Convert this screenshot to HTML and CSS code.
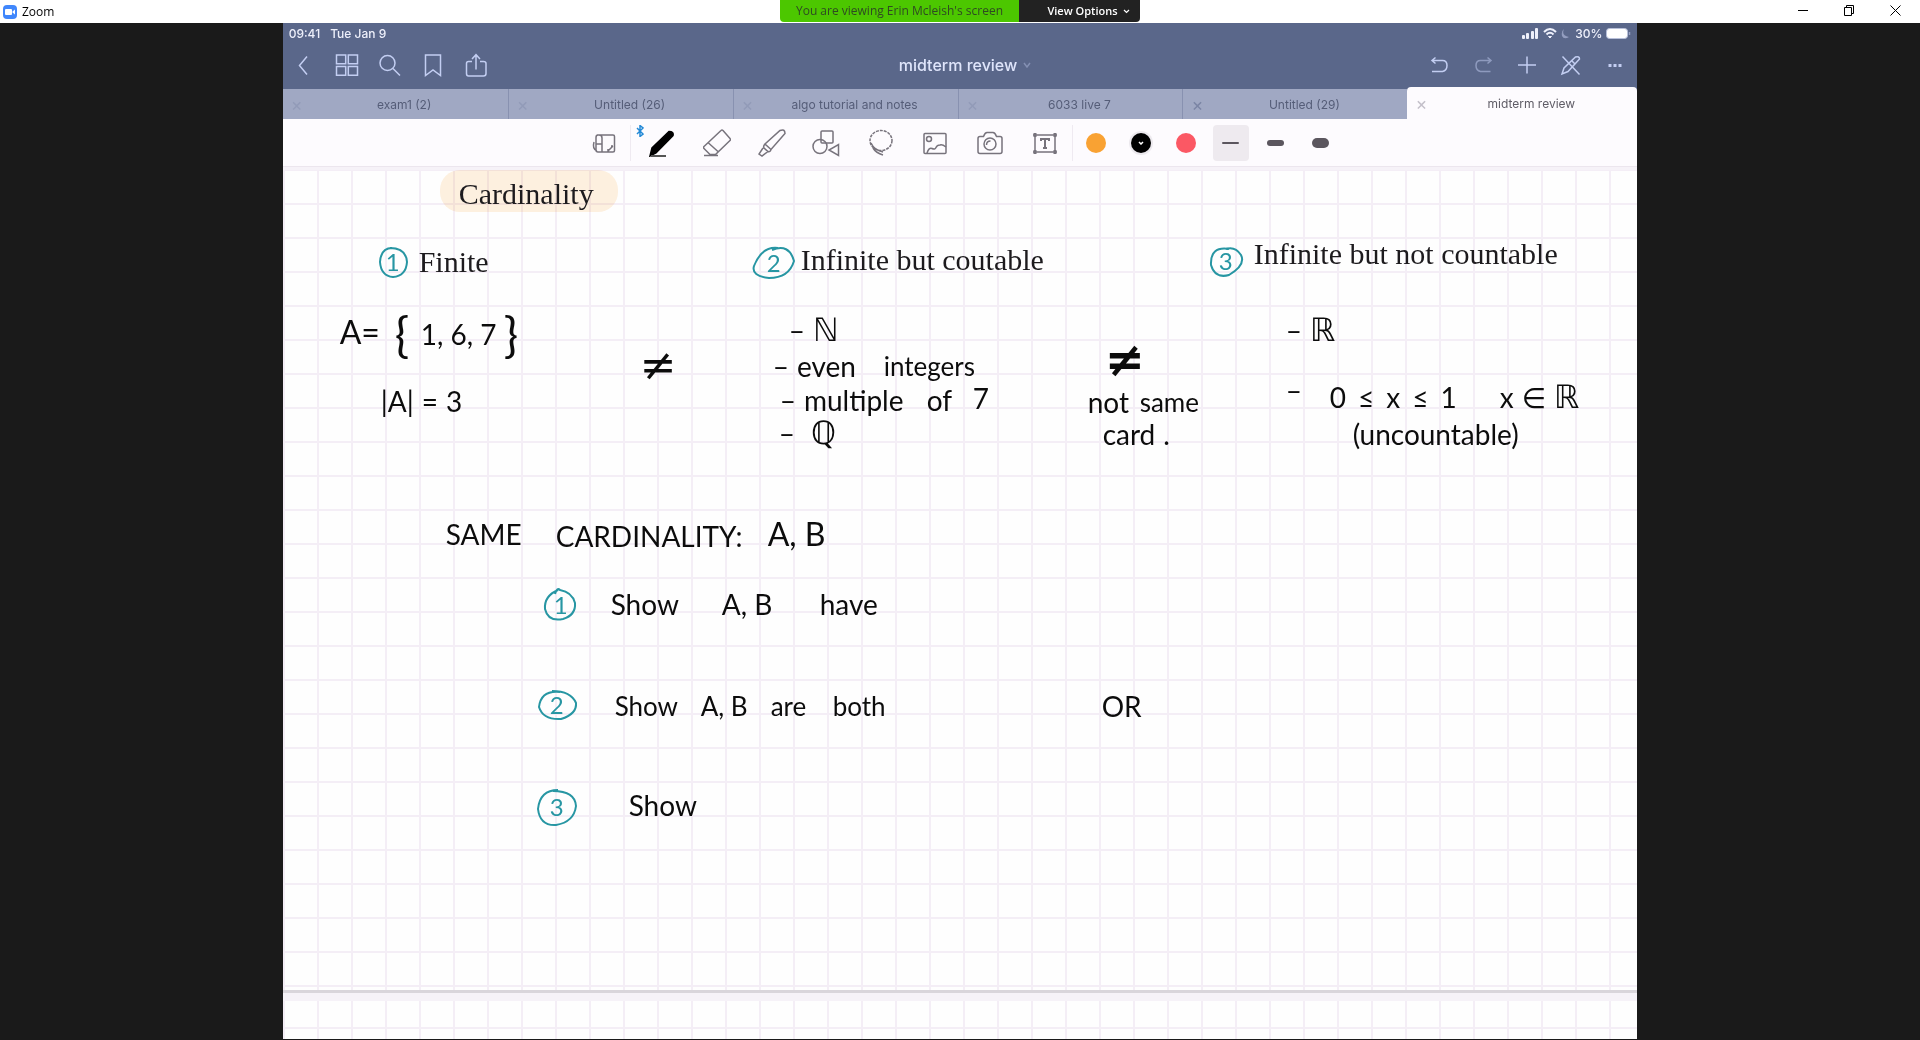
FILE: index.html
```html
<!DOCTYPE html>
<html lang="en">
<head>
<meta charset="utf-8">
<title>Zoom</title>
<link rel="stylesheet" href="styles.css">
</head>
<body>
<header class="titlebar">
  <div class="app-name">
    <svg width="14" height="14" viewBox="0 0 14 14"><rect width="14" height="14" rx="4" fill="#4087fc"/><rect x="2" y="4" width="7" height="6" rx="1" fill="#fff"/><path d="M9.5 6.4 12 4.6v4.8L9.500 7.600z" fill="#fff"/></svg>
    <span>Zoom</span>
  </div>
  <div class="share-banner">
    <span class="share-text">You are viewing Erin Mcleish's screen</span>
    <button class="view-options">View Options
      <svg width="7" height="5" viewBox="0 0 7 5"><path d="M1 1l2.500 2.500L6 1" fill="none" stroke="#fff" stroke-width="1.200"/></svg>
    </button>
  </div>
  <div class="window-buttons">
    <button aria-label="Minimize"><svg width="11" height="11" viewBox="0 0 11 11"><path d="M0 5.500h10" stroke="#000"/></svg></button>
    <button aria-label="Restore"><svg width="11" height="11" viewBox="0 0 11 11" fill="none" stroke="#000"><path d="M.5 2.500h7v8h-7zM2.500 2.500v-2h7v8h-2"/></svg></button>
    <button aria-label="Close"><svg width="11" height="11" viewBox="0 0 11 11"><path d="M.5.5l10 10M10.500.5l-10 10" stroke="#000"/></svg></button>
  </div>
</header>

<main class="stage">
<div class="tablet">
  <div class="status">
    <span>09:41</span><span>Tue Jan 9</span>
    <span class="status-right">
      <svg width="17" height="11" viewBox="0 0 17 11" fill="#eef0fb"><rect x="0" y="7" width="3" height="4" rx="1"/><rect x="4" y="5" width="3" height="6" rx="1"/><rect x="9" y="3" width="3" height="8" rx="1"/><rect x="13" y="0" width="3" height="11" rx="1"/></svg>
      <svg width="14" height="11" viewBox="0 0 14 11" fill="none" stroke="#eef0fb" stroke-width="2"><path d="M1 4Q7-2 13 4M3.500 6.500Q7 3 10.500 6.500"/><path d="M5.500 8.500h3L7 10z" fill="#eef0fb" stroke-width="1"/></svg>
      <svg width="10" height="11" viewBox="0 0 10 11"><path d="M3 1Q0 8 8 9Q3 12 1 8Q0 3 3 1z" fill="#939dbf"/></svg>
      <span>30%</span>
      <svg width="25" height="11" viewBox="0 0 25 11"><rect x=".5" y=".5" width="21" height="10" rx="3" fill="#fff" stroke="#b7bfd9"/><path d="M23.500 4v3" stroke="#97a1c2" stroke-width="1.500"/></svg>
    </span>
  </div>
  <nav class="navbar">
    <div class="nav-group">
      <button aria-label="Back"><svg width="24" height="24" viewBox="0 0 24 24"><path d="M15 3.500L7.500 12.500 15 21.500"/></svg></button>
      <button aria-label="Thumbnails"><svg width="24" height="24" viewBox="0 0 24 24"><path d="M1.500 2h9.200v8.700H1.500zM13.300 2h9.200v8.700h-9.200zM1.500 13.500h9.200v8.700H1.500zM13.300 13.500h9.200v8.700h-9.200z"/></svg></button>
      <button aria-label="Search"><svg width="24" height="24" viewBox="0 0 24 24"><circle cx="9.500" cy="10" r="7.500"/><path d="M15 15.500l7 7"/></svg></button>
      <button aria-label="Bookmark"><svg width="24" height="24" viewBox="0 0 24 24"><path d="M4.500 2h15v20.500L12 17l-7.500 5.500z"/></svg></button>
      <button aria-label="Share"><svg width="24" height="24" viewBox="0 0 24 24"><path d="M8 8.500H4.500q-2 0-2 2v10q0 2.500 2 2.500h15q2.500 0 2.500-2.500v-10q0-2-2.500-2H16M12 16.500V2M8 6l4-4.300L16 6"/></svg></button>
    </div>
    <button class="doc-title">midterm review <svg width="8" height="6" viewBox="0 0 8 6"><path d="M1 1l3 4 3-4"/></svg></button>
    <div class="nav-group">
      <button aria-label="Undo"><svg width="24" height="24" viewBox="0 0 24 24"><path d="M6 7.500h9.500q4.500 0 4.500 5t-4.500 6H5M8.500 4.500l-3.500 3 3.500 3"/></svg></button>
      <button aria-label="Redo" class="dim"><svg width="24" height="24" viewBox="0 0 24 24"><path d="M19 7.500h-9.500q-4.500 0-4.500 5t4.500 6h10M16.500 4.500l3.500 3-3.500 3"/></svg></button>
      <button aria-label="Add"><svg width="24" height="24" viewBox="0 0 24 24"><path d="M12 3.500v17M3 12h18"/></svg></button>
      <button aria-label="Pen off"><svg width="24" height="24" viewBox="0 0 24 24"><path d="M3.500 3.500l17 18M3 21l2-6L16.500 4q4-1 4 2L9 18.500zM13 8l3.500 3.500"/></svg></button>
      <button aria-label="More"><svg width="24" height="24" viewBox="0 0 24 24"><path d="M5.500 12.500h3M10.500 12.500h3M15.500 12.500h3" stroke-width="3"/></svg></button>
    </div>
  </nav>
  <div class="tabs">
    <div class="tab"><button aria-label="Close tab">×</button><a href="#">exam1 (2)</a></div>
    <div class="tab"><button aria-label="Close tab">×</button><a href="#">Untitled (26)</a></div>
    <div class="tab"><button aria-label="Close tab">×</button><a href="#">algo tutorial and notes</a></div>
    <div class="tab"><button aria-label="Close tab">×</button><a href="#">6033 live 7</a></div>
    <div class="tab near"><button aria-label="Close tab">×</button><a href="#">Untitled (29)</a></div>
    <div class="tab active"><button aria-label="Close tab">×</button><a href="#">midterm review</a></div>
  </div>
  <div class="toolbar">
    <button class="zoom-tool" aria-label="Zoom window"><svg width="26" height="26" viewBox="0 0 26 26"><path d="M6 5h16q1.500 0 1.500 1.500v14q0 1.500-1.500 1.500H7q-2 0-2-2V7.500Q5 5 7 5h1q3 0 3 3v14M5 14h6M3 12q-2 7 3 9M22 16l-5 5v-2M22 16h-2"/></svg></button>
    <div class="tools">
      <button aria-label="Pen"><svg class="bt" width="8" height="12" viewBox="0 0 8 12"><path d="M1 3l6 6-3 2.500V.5L7 3 1 9" stroke="#2389d6" stroke-width="1.500"/></svg><svg width="28" height="28" viewBox="0 0 28 28"><path d="M21 2.500q5 0 4 4L8 24l-6 3 2-8z" fill="#000" stroke="#000"/><path d="M3 27h15" stroke="#555" stroke-width="2"/></svg></button>
      <button aria-label="Eraser"><svg width="28" height="28" viewBox="0 0 28 28"><path d="M18 1.500q1-1 2 0l7 8q1 1 0 2L12.500 25.500H7L1 19.500q-1-1 0-2zM5.500 14l10 9M1 26.500h14"/></svg></button>
      <button aria-label="Highlighter"><svg width="28" height="28" viewBox="0 0 28 28"><path d="M22 1.500q5-2 5 3L13 20.500 7 15zM7 15q-2 2-1 4l4 3.500q2 1 3-2M5 19l-4 6 3 2 6-4.500"/></svg></button>
      <button aria-label="Shapes"><svg width="28" height="28" viewBox="0 0 28 28"><rect x="9" y="2" width="12" height="12" rx="1"/><circle cx="8" cy="17.500" r="7"/><path d="M26.500 15.500v11L17 21z"/></svg></button>
      <button aria-label="Lasso"><svg width="28" height="28" viewBox="0 0 28 28"><ellipse cx="14" cy="11.500" rx="11" ry="10" stroke-dasharray="3 1"/><path d="M4 14q3 7 12 9M6 19q3 5 10 7"/></svg></button>
      <button aria-label="Image"><svg width="28" height="28" viewBox="0 0 28 28"><rect x="3" y="4.500" width="22" height="20" rx="1"/><circle cx="8" cy="10" r="2.500"/><path d="M6 24q2-6 5-4.500t4-1 4-2.500q2-1 6 2"/></svg></button>
      <button aria-label="Camera"><svg width="28" height="28" viewBox="0 0 28 28"><path d="M4 7.500h3.500q1.500-4 3.500-4h6q2 0 3.500 4h3.500q2 0 2 2v13q0 2-2 2H4q-2 0-2-2v-13q0-2 2-2"/><circle cx="14" cy="15" r="6"/><path d="M10.500 16q0-4 4-4"/></svg></button>
      <button aria-label="Text"><svg width="28" height="28" viewBox="0 0 28 28"><path d="M4 5v19M24 5v19M2 6h24M2 23h24"/><path d="M4 4v4M24 4v4M4 21v4M24 21v4" stroke-width="3"/><path d="M10 12v-2h8v2M14 10v9M12 19h4" stroke-width="2"/></svg></button>
    </div>
    <div class="swatches">
      <button aria-label="Orange"><i class="dot orange"></i></button>
      <button aria-label="Black"><i class="dot black"><svg width="6" height="4" viewBox="0 0 6 4"><path d="M1 1l2 2 2-2" stroke="#fff"/></svg></i></button>
      <button aria-label="Red"><i class="dot red"></i></button>
      <button aria-label="Thin" class="selected"><i class="stroke thin"></i></button>
      <button aria-label="Medium"><i class="stroke medium"></i></button>
      <button aria-label="Thick"><i class="stroke thick"></i></button>
    </div>
  </div>

  <section class="board">
    <div class="sheet">
      <div class="marker"></div>
      <h1 class="typed t-title">Cardinality</h1>
      <h2 class="typed t-one">Finite</h2>
      <h2 class="typed t-two">Infinite but coutable</h2>
      <h2 class="typed t-three">Infinite but not countable</h2>

      <svg class="ink" width="1355" height="700" viewBox="0 0 1355 700">
        <path d="M109 82Q98 82 97 96Q98 110 110 111Q123 110 124 96Q123 82 107 82"/>
        <path d="M489 84Q506 77 511 95Q506 112 486 112Q468 110 471 100Q479 80 495 82"/>
        <path d="M946 83Q927 80 928 99Q932 113 946 109Q963 99 958 89Q952 80 943 83"/>
        <path d="M275 424Q261 430 262 443Q265 456 280 453Q293 449 292 437Q289 426 277 424Q274 421 272 428"/>
        <path d="M277 526Q258 524 256 541Q260 554 278 553Q294 548 293 537Q288 525 269 525"/>
        <path d="M275 624Q257 624 255 643Q257 660 273 659Q291 656 293 640Q292 625 270 625"/>
      </svg>
      <span class="num k1">1</span><span class="num k2">2</span><span class="num k3">3</span>
      <span class="num k4">1</span><span class="num k5">2</span><span class="num k6">3</span>

      <p class="hand big h-a">A=</p>
      <p class="hand brace h-open">{</p><p class="hand h-set">1, 6, 7</p><p class="hand brace h-close">}</p>
      <p class="hand h-card"><span>|A|</span><span>=</span><span>3</span></p>
      <p class="hand sign h-ne1">≠</p>

      <p class="hand h-n"><span>–</span><span class="set">ℕ</span></p>
      <p class="hand h-even"><span>–</span><span>even</span></p><p class="hand small h-int">integers</p>
      <p class="hand h-mult"><span>–</span><span>multiple</span></p><p class="hand h-of">of</p><p class="hand h-seven">7</p>
      <p class="hand wide h-q"><span>–</span><span class="set">ℚ</span></p>

      <p class="hand sign heavy h-ne2">≠</p>
      <p class="hand h-not">not</p><p class="hand small h-same">same</p>
      <p class="hand h-cardword"><span>card</span><span>.</span></p>

      <p class="hand h-r"><span>–</span><span class="set">ℝ</span></p>
      <p class="hand h-dash">–</p>
      <p class="hand roomy h-range"><span>0</span><span>≤</span><span>x</span><span>≤</span><span>1</span></p>
      <p class="hand h-xr"><span>x</span><span>∈</span><span class="set">ℝ</span></p>
      <p class="hand h-unc">(uncountable)</p>

      <p class="hand h-same2">SAME</p><p class="hand h-cardinality">CARDINALITY:</p><p class="hand big h-ab">A, B</p>
      <p class="hand h-s1">Show</p><p class="hand h-ab1">A, B</p><p class="hand h-have">have</p>
      <p class="hand small h-s2">Show</p><p class="hand small h-ab2">A, B</p><p class="hand small h-are">are</p><p class="hand small h-both">both</p>
      <p class="hand h-or">OR</p>
      <p class="hand h-s3">Show</p>
    </div>
    <div class="next-sheet"></div>
  </section>
</div>
</main>
</body>
</html>
```
FILE: styles.css
```css
* { box-sizing: border-box; }
html, body { height: 100%; }
body {
  margin: 0;
  display: flex;
  flex-direction: column;
  background: #1a1a1a;
  font-family: Inter, "Liberation Sans", sans-serif;
  overflow: hidden;
}
button {
  padding: 0;
  border: 0;
  background: none;
  font: inherit;
  color: inherit;
  display: flex;
  align-items: center;
  justify-content: center;
}
a { color: inherit; text-decoration: none; }

/* Zoom window bar */
.titlebar {
  display: grid;
  grid-template-columns: 1fr auto 1fr;
  height: 23px;
  background: #fff;
  font: 12px "Open Sans", sans-serif;
  flex: none;
}
.app-name { display: flex; align-items: center; gap: 5px; padding-left: 3px; color: #000; }
.share-banner {
  display: flex;
  height: 22px;
  border-radius: 0 0 4px 4px;
  overflow: hidden;
  line-height: 22px;
}
.share-text { width: 239px; text-align: center; background: #4cc700; color: #2f4a22; }
.view-options { width: 121px; gap: 5px; padding-left: 18px; background: #222; color: #fff; font-size: 11px; font-weight: 600; }
.window-buttons { display: flex; justify-content: flex-end; padding-right: 2px; }
.window-buttons button { width: 46px; padding-bottom: 2px; }

/* Shared tablet */
.stage { flex: 1; min-height: 0; display: flex; justify-content: center; padding-bottom: 1px; }
.tablet {
  height: 100%;
  aspect-ratio: 4 / 3;
  display: flex;
  flex-direction: column;
  background: #5a678a;
  overflow: hidden;
}
.status {
  display: flex;
  align-items: center;
  gap: 10px;
  height: 20px;
  padding: 0 6px;
  color: #eef0fb;
  font-size: 12px;
  font-weight: 500;
  flex: none;
}
.status-right { margin-left: auto; display: flex; align-items: center; gap: 4px; }
.navbar {
  display: grid;
  grid-template-columns: 1fr auto 1fr;
  align-items: center;
  height: 44px;
  color: #dfe5fb;
  flex: none;
}
.nav-group { display: flex; }
.nav-group:last-child { justify-content: flex-end; }
.nav-group button { width: 44px; height: 44px; }
.nav-group:first-child button { width: 43px; }
.navbar svg { fill: none; stroke: #c3cef2; stroke-width: 1.5; }
.dim { opacity: .5; }
.doc-title { gap: 6px; padding-left: 10px; font-size: 16px; font-weight: 500; }
.doc-title svg { stroke: #8490b3; }

.tabs { display: grid; grid-template-columns: repeat(5, 225fr) 230fr; align-items: end; flex: none; height: 32px; }
.tab {
  display: grid;
  grid-template-columns: 28px 1fr 10px;
  align-items: center;
  height: 30px;
  background: #a0a8c3;
  border-left: 1px solid #8891b0;
  color: #555d78;
  font-size: 12px;
  text-align: center;
}
.tab:first-child { border-left: 0; }
.tab button { color: #929bb8; font-size: 18px; }
.tab.near button { color: #7b85a5; }
.tab.active {
  height: 32px;
  background: #fdfbfe;
  border: 0;
  border-radius: 4px 4px 0 0;
  color: #5f5c66;
}
.tab.active button { color: #c4c0ca; }

.toolbar {
  display: flex;
  justify-content: center;
  align-items: center;
  height: 47px;
  background: #fdfbfe;
  flex: none;
}
.toolbar svg { fill: none; stroke: #77737c; stroke-width: 1.5; }
.zoom-tool { width: 54px; height: 36px; border-right: 1px solid #efeaf1; }
.tools { display: grid; grid-template-columns: repeat(8, 1fr); width: 441px; padding-left: 4px; }
.tools button { height: 36px; position: relative; }
.tools .bt { position: absolute; left: 1px; top: 0; }
.swatches {
  display: grid;
  grid-template-columns: repeat(6, 45px);
  border-left: 1px solid #efeaf1;
}
.swatches button { height: 36px; }
.swatches .selected { width: 36px; margin: 0 auto; background: #eeeaef; border-radius: 4px; }
.dot { display: grid; place-items: center; width: 20px; height: 20px; border-radius: 50%; }
.orange { background: #f9a233; }
.black { background: #000; box-shadow: 0 0 0 2px #ece9ee; }
.red { background: #fb5864; }
.stroke { width: 17px; border-radius: 5px; background: #5b565e; }
.thin { height: 2px; }
.medium { height: 6px; }
.thick { height: 10px; }

/* Notebook canvas: every note sits freely on squared paper */
.board { flex: 1; min-height: 0; display: flex; flex-direction: column; background: #f6f2f8; border-top: 1px solid #ece6ee; }
.sheet, .next-sheet {
  background-color: #fefefe;
  background-image:
    linear-gradient(90deg, #f4eef6 2px, transparent 2px),
    linear-gradient(#f4eef6 2px, transparent 2px);
  background-size: 34px 34px;
}
.sheet {
  position: relative;
  flex: 1;
  margin-top: 3px;
  background-position: 0 -1px;
  border-bottom: 3px solid #d9d5db;
}
.next-sheet { height: 38px; margin-top: 8px; background-position: 0 26px; flex: none; }
.sheet > * { position: absolute; margin: 0; white-space: nowrap; }
.marker {
  left: 157px; top: 0;
  width: 178px; height: 42px;
  border-radius: 20px;
  background: #fef1e0;
  mix-blend-mode: multiply;
}
.typed { font: 30px/32px "Liberation Serif", serif; color: #1d1b1e; }
.t-title { left: 176px; top: 8px; }
.t-one { left: 136px; top: 76px; }
.t-two { left: 518px; top: 74px; }
.t-three { left: 971px; top: 68px; }

.ink { left: 0; top: -4px; fill: none; stroke: #2796a3; stroke-width: 2; }
.num { width: 24px; text-align: center; font: 24px/24px Lato, sans-serif; color: #2796a3; }
.k1 { left: 98px; top: 80px; }
.k2 { left: 479px; top: 81px; }
.k3 { left: 931px; top: 79px; }
.k4 { left: 266px; top: 423px; }
.k5 { left: 262px; top: 523px; }
.k6 { left: 262px; top: 625px; }

.hand { display: flex; gap: 8px; font: 28px/32px Lato, "DejaVu Sans", sans-serif; color: #0c0c0c; }
.hand.big { font-size: 32px; }
.hand.small { font-size: 26px; }
.hand.roomy { gap: 12px; }
.hand.wide { gap: 16px; }
.hand.brace { font-size: 48px; }
.hand.sign { font: 44px/44px "DejaVu Sans", sans-serif; }
.hand.heavy { font-size: 48px; font-weight: bold; }
.set { font-family: "DejaVu Sans", sans-serif; font-size: 32px; }

.h-a { left: 57px; top: 146px; }
.h-open { left: 112px; top: 148px; }
.h-set { left: 138px; top: 148px; }
.h-close { left: 221px; top: 148px; }
.h-card { left: 98px; top: 215px; }
.h-ne1 { left: 357px; top: 173px; }
.h-n { left: 506px; top: 144px; }
.h-even { left: 490px; top: 180px; }
.h-int { left: 601px; top: 180px; }
.h-mult { left: 497px; top: 214px; }
.h-of { left: 644px; top: 214px; }
.h-seven { left: 690px; top: 212px; }
.h-q { left: 496px; top: 247px; }
.h-ne2 { left: 822px; top: 167px; }
.h-not { left: 805px; top: 216px; }
.h-same { left: 857px; top: 216px; }
.h-cardword { left: 820px; top: 248px; }
.h-r { left: 1003px; top: 144px; }
.h-dash { left: 1003px; top: 204px; }
.h-range { left: 1047px; top: 211px; }
.h-xr { left: 1217px; top: 211px; }
.h-unc { left: 1070px; top: 248px; }
.h-same2 { left: 163px; top: 348px; }
.h-cardinality { left: 273px; top: 350px; }
.h-ab { left: 485px; top: 348px; }
.h-s1 { left: 328px; top: 418px; }
.h-ab1 { left: 439px; top: 418px; }
.h-have { left: 537px; top: 418px; }
.h-s2 { left: 332px; top: 520px; }
.h-ab2 { left: 418px; top: 520px; }
.h-are { left: 488px; top: 520px; }
.h-both { left: 550px; top: 520px; }
.h-or { left: 819px; top: 520px; }
.h-s3 { left: 346px; top: 619px; }
```
